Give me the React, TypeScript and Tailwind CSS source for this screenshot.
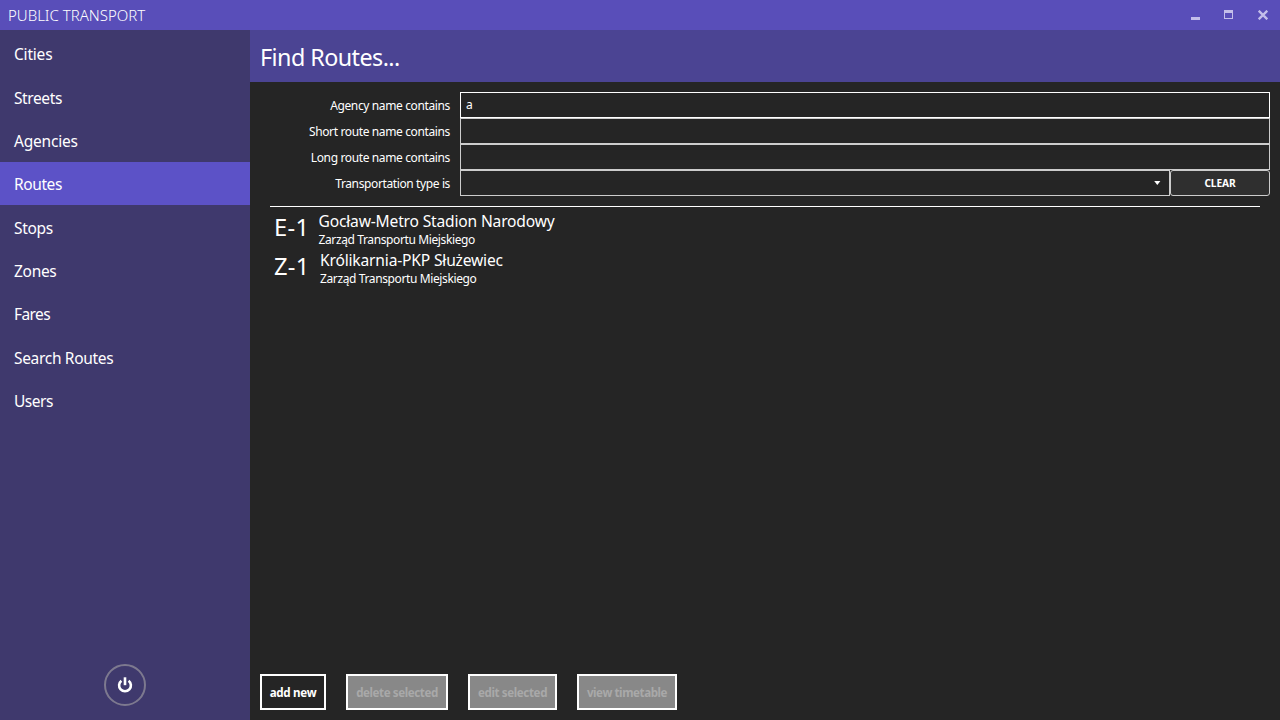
const navItems = [
  { label: 'Cities', tracking: 'tracking-[-0.2px]' },
  { label: 'Streets', tracking: 'tracking-[-0.4px]' },
  { label: 'Agencies', tracking: 'tracking-[-0.2px]' },
  { label: 'Routes', tracking: 'tracking-[-0.4px]', active: true },
  { label: 'Stops', tracking: 'tracking-[-0.3px]' },
  { label: 'Zones', tracking: 'tracking-[-0.3px]' },
  { label: 'Fares', tracking: 'tracking-[-0.6px]' },
  { label: 'Search Routes', tracking: 'tracking-[-0.32px]' },
  { label: 'Users', tracking: 'tracking-[-0.5px]' },
];

const filters = [
  { label: 'Agency name contains', value: 'a', border: 'border-white' },
  { label: 'Short route name contains', value: '', border: 'border-[#cccccc]' },
  { label: 'Long route name contains', value: '', border: 'border-[#cccccc]' },
];

const routes = [
  { code: 'E-1', name: 'Gocław-Metro Stadion Narodowy', agency: 'Zarząd Transportu Miejskiego', width: 'w-[44.5px]' },
  { code: 'Z-1', name: 'Królikarnia-PKP Służewiec', agency: 'Zarząd Transportu Miejskiego', width: 'w-[46px]' },
];

const actions = [
  { label: 'add new', style: 'w-[66px] text-white tracking-[-0.3px]', disabled: false },
  { label: 'delete selected', style: 'w-[102px] bg-[#888888] text-[#a9a9a9] tracking-[-0.42px]', disabled: true },
  { label: 'edit selected', style: 'w-[89px] bg-[#888888] text-[#a9a9a9] tracking-[-0.38px]', disabled: true },
  { label: 'view timetable', style: 'w-[100px] bg-[#888888] text-[#a9a9a9] tracking-[-0.42px]', disabled: true },
];

function TitleBar() {
  return (
    <header className="flex h-[30px] shrink-0 items-center justify-between bg-[#594eb9] pl-2 pr-3">
      <h1 className="text-[15px] font-light leading-[30px] text-white">PUBLIC TRANSPORT</h1>
      <div className="flex items-center gap-[23px] text-[#c3beea]">
        <button aria-label="Minimize">
          <svg className="block" width="10" height="10" viewBox="0 0 10 10" shapeRendering="crispEdges">
            <path d="M0 7h9v3H0z" fill="currentColor" />
          </svg>
        </button>
        <button aria-label="Maximize">
          <svg className="block" width="10" height="10" viewBox="0 0 10 10" shapeRendering="crispEdges">
            <path d="M0 0h9v9H0zM1 3v5h7V3z" fill="currentColor" fillRule="evenodd" />
          </svg>
        </button>
        <button aria-label="Close" className="ml-[1px]">
          <svg className="block" width="10" height="10" viewBox="0 0 10 10">
            <path d="M0.7 0.7L9.3 9.3M9.3 0.7L0.7 9.3" stroke="currentColor" strokeWidth="2.3" />
          </svg>
        </button>
      </div>
    </header>
  );
}

function Sidebar() {
  return (
    <aside className="flex w-[250px] shrink-0 flex-col items-center justify-between bg-[#3f396d] pb-[14px] pt-[2px]">
      <nav className="w-full">
        {navItems.map((item) => (
          <a
            key={item.label}
            className={`flex h-[43.33px] items-center pl-[14px] text-[15.5px] ${item.tracking} ${item.active ? 'bg-[#5c52c7]' : ''}`}
          >
            <span className="pt-[1.4px] leading-5">{item.label}</span>
          </a>
        ))}
      </nav>
      <button aria-label="Power" className="flex size-[42px] items-center justify-center rounded-full border-2 border-[#7d798f]">
        <svg width="16" height="18" viewBox="0 0 16 18" fill="none" stroke="white" strokeWidth="2.6">
          <path d="M4.4 4.7A5.9 5.9 0 1 0 11.6 4.7" />
          <path d="M8 1.3V9.2" />
        </svg>
      </button>
    </aside>
  );
}

function Filters() {
  return (
    <form className="px-[10px] pt-[10px] text-[12px] leading-[24px]">
      {filters.map((f) => (
        <div key={f.label} className="flex h-[26px]">
          <label className="w-[190px] pt-[1.5px] text-right tracking-[-0.37px]">{f.label}</label>
          <div className={`ml-[10px] flex-1 border pl-[5px] ${f.border}`}>{f.value}</div>
        </div>
      ))}
      <div className="flex h-[26px]">
        <label className="w-[190px] pt-[1.5px] text-right tracking-[-0.38px]">Transportation type is</label>
        <div className="ml-[10px] flex flex-1 items-center justify-end border border-[#cccccc] pr-[8px]">
          <svg width="7" height="4" viewBox="0 0 7 4">
            <path d="M0.2 0H6.4L3.3 4z" fill="white" />
          </svg>
        </div>
        <button type="button" className="w-[100px] rounded-[3px] border border-[#cccccc] bg-[#2f2f2f] text-[10.2px] font-bold tracking-[-0.1px]">
          CLEAR
        </button>
      </div>
    </form>
  );
}

export default function App() {
  return (
    <div className="flex h-[720px] w-[1280px] flex-col overflow-hidden bg-[#252525] font-['Noto_Sans','Open_Sans',sans-serif] text-white">
      <TitleBar />
      <div className="flex min-h-0 flex-1">
        <Sidebar />
        <main className="flex flex-1 flex-col">
          <h2 className="h-[52px] bg-[#4b4493] pl-[10px] text-[23.3px] leading-[55px] tracking-[-0.54px]">Find Routes...</h2>
          <Filters />
          <ul className="mx-5 mt-[10px] flex-1 border-t border-white pt-[4px]">
            {routes.map((r) => (
              <li key={r.code} className="flex h-[39px] pl-1">
                <span className={`shrink-0 text-[23.7px] leading-[32px] tracking-[0.3px] ${r.width}`}>{r.code}</span>
                <div className="whitespace-nowrap">
                  <p className="text-[15.6px] leading-[20px] tracking-[-0.18px]">{r.name}</p>
                  <p className="mt-px text-[12px] leading-[16px] tracking-[-0.38px]">{r.agency}</p>
                </div>
              </li>
            ))}
          </ul>
          <footer className="flex gap-5 pb-[10px] pl-[10px]">
            {actions.map((a) => (
              <button
                key={a.label}
                disabled={a.disabled}
                className={`h-[36px] whitespace-nowrap border-2 border-white pt-[2px] text-[11.6px] font-bold leading-[28px] ${a.style}`}
              >
                {a.label}
              </button>
            ))}
          </footer>
        </main>
      </div>
    </div>
  );
}
